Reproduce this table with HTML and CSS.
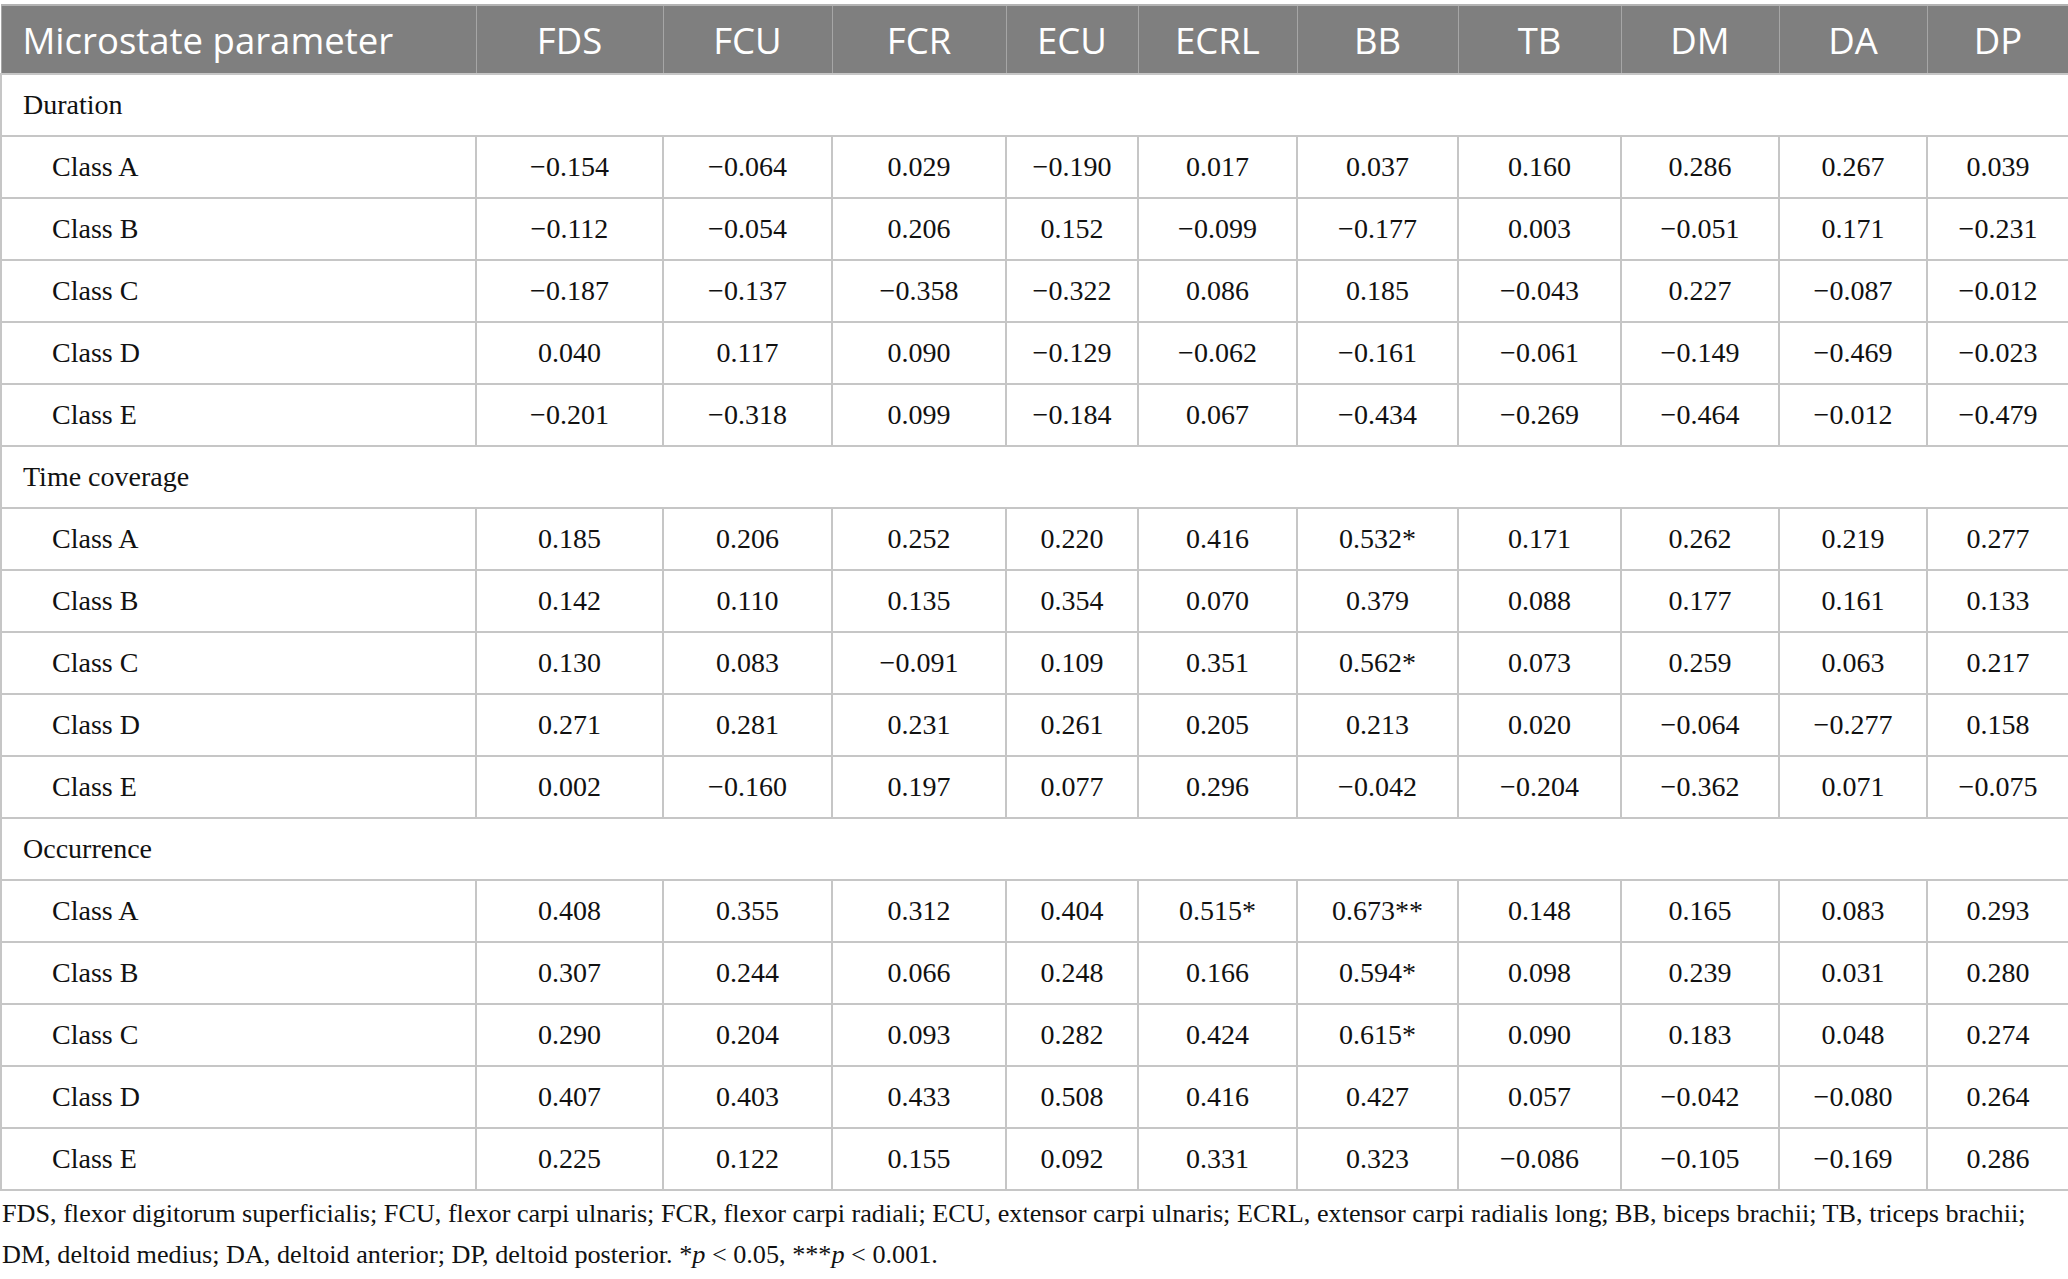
FILE: index.html
```html
<!DOCTYPE html>
<html>
  <head>
    <title>Microstate parameters and muscle activity</title>
    <link rel="stylesheet" href="styles.css">
  </head>
  <body>
    <table class="data">
      <colgroup>
        <col class="c-label">
        <col class="c-fds">
        <col class="c-fcu">
        <col class="c-fcr">
        <col class="c-ecu">
        <col class="c-ecrl">
        <col class="c-bb">
        <col class="c-tb">
        <col class="c-dm">
        <col class="c-da">
        <col class="c-dp">
      </colgroup>
      <thead>
        <tr>
          <th class="first">Microstate parameter</th>
          <th>FDS</th>
          <th>FCU</th>
          <th>FCR</th>
          <th>ECU</th>
          <th>ECRL</th>
          <th>BB</th>
          <th>TB</th>
          <th>DM</th>
          <th>DA</th>
          <th>DP</th>
        </tr>
      </thead>
      <tbody>
        <tr class="section"><td colspan="11">Duration</td></tr>
        <tr><td class="cls">Class A</td><td>&minus;0.154</td><td>&minus;0.064</td><td>0.029</td><td>&minus;0.190</td><td>0.017</td><td>0.037</td><td>0.160</td><td>0.286</td><td>0.267</td><td>0.039</td></tr>
        <tr><td class="cls">Class B</td><td>&minus;0.112</td><td>&minus;0.054</td><td>0.206</td><td>0.152</td><td>&minus;0.099</td><td>&minus;0.177</td><td>0.003</td><td>&minus;0.051</td><td>0.171</td><td>&minus;0.231</td></tr>
        <tr><td class="cls">Class C</td><td>&minus;0.187</td><td>&minus;0.137</td><td>&minus;0.358</td><td>&minus;0.322</td><td>0.086</td><td>0.185</td><td>&minus;0.043</td><td>0.227</td><td>&minus;0.087</td><td>&minus;0.012</td></tr>
        <tr><td class="cls">Class D</td><td>0.040</td><td>0.117</td><td>0.090</td><td>&minus;0.129</td><td>&minus;0.062</td><td>&minus;0.161</td><td>&minus;0.061</td><td>&minus;0.149</td><td>&minus;0.469</td><td>&minus;0.023</td></tr>
        <tr><td class="cls">Class E</td><td>&minus;0.201</td><td>&minus;0.318</td><td>0.099</td><td>&minus;0.184</td><td>0.067</td><td>&minus;0.434</td><td>&minus;0.269</td><td>&minus;0.464</td><td>&minus;0.012</td><td>&minus;0.479</td></tr>
        <tr class="section"><td colspan="11">Time coverage</td></tr>
        <tr><td class="cls">Class A</td><td>0.185</td><td>0.206</td><td>0.252</td><td>0.220</td><td>0.416</td><td>0.532*</td><td>0.171</td><td>0.262</td><td>0.219</td><td>0.277</td></tr>
        <tr><td class="cls">Class B</td><td>0.142</td><td>0.110</td><td>0.135</td><td>0.354</td><td>0.070</td><td>0.379</td><td>0.088</td><td>0.177</td><td>0.161</td><td>0.133</td></tr>
        <tr><td class="cls">Class C</td><td>0.130</td><td>0.083</td><td>&minus;0.091</td><td>0.109</td><td>0.351</td><td>0.562*</td><td>0.073</td><td>0.259</td><td>0.063</td><td>0.217</td></tr>
        <tr><td class="cls">Class D</td><td>0.271</td><td>0.281</td><td>0.231</td><td>0.261</td><td>0.205</td><td>0.213</td><td>0.020</td><td>&minus;0.064</td><td>&minus;0.277</td><td>0.158</td></tr>
        <tr><td class="cls">Class E</td><td>0.002</td><td>&minus;0.160</td><td>0.197</td><td>0.077</td><td>0.296</td><td>&minus;0.042</td><td>&minus;0.204</td><td>&minus;0.362</td><td>0.071</td><td>&minus;0.075</td></tr>
        <tr class="section"><td colspan="11">Occurrence</td></tr>
        <tr><td class="cls">Class A</td><td>0.408</td><td>0.355</td><td>0.312</td><td>0.404</td><td>0.515*</td><td>0.673**</td><td>0.148</td><td>0.165</td><td>0.083</td><td>0.293</td></tr>
        <tr><td class="cls">Class B</td><td>0.307</td><td>0.244</td><td>0.066</td><td>0.248</td><td>0.166</td><td>0.594*</td><td>0.098</td><td>0.239</td><td>0.031</td><td>0.280</td></tr>
        <tr><td class="cls">Class C</td><td>0.290</td><td>0.204</td><td>0.093</td><td>0.282</td><td>0.424</td><td>0.615*</td><td>0.090</td><td>0.183</td><td>0.048</td><td>0.274</td></tr>
        <tr><td class="cls">Class D</td><td>0.407</td><td>0.403</td><td>0.433</td><td>0.508</td><td>0.416</td><td>0.427</td><td>0.057</td><td>&minus;0.042</td><td>&minus;0.080</td><td>0.264</td></tr>
        <tr><td class="cls">Class E</td><td>0.225</td><td>0.122</td><td>0.155</td><td>0.092</td><td>0.331</td><td>0.323</td><td>&minus;0.086</td><td>&minus;0.105</td><td>&minus;0.169</td><td>0.286</td></tr>
      </tbody>
    </table>
    <p class="note">
      FDS, flexor digitorum superficialis; FCU, flexor carpi ulnaris; FCR, flexor carpi radiali; ECU, extensor carpi ulnaris; ECRL, extensor carpi radialis long; BB, biceps brachii; TB, triceps brachii; DM, deltoid medius; DA, deltoid anterior; DP, deltoid posterior. <span class="sig">*<i>p</i>&nbsp;&lt;&nbsp;0.05,</span> <span class="sig">***<i>p</i>&nbsp;&lt;&nbsp;0.001.</span>
    </p>
  </body>
</html>
```

FILE: styles.css
```css
body {
  margin: 0;
  padding-top: 4px;
  background: #ffffff;
  font-family: "Liberation Serif", serif;
  color: #111111;
}

/* main table */
.data {
  width: 2068px;
  table-layout: fixed;
  border-collapse: collapse;
}

.c-label { width: 475px; }
.c-fds { width: 187px; }
.c-fcu { width: 169px; }
.c-fcr { width: 174px; }
.c-ecu { width: 132px; }
.c-ecrl { width: 159px; }
.c-bb { width: 161px; }
.c-tb { width: 163px; }
.c-dm { width: 158px; }
.c-da { width: 148px; }
.c-dp { width: 142px; }

.data th {
  height: 67px;
  padding: 0;
  background: #7f7f7f;
  color: #ffffff;
  font-family: "Open Sans", sans-serif;
  font-weight: normal;
  font-size: 36.5px;
  text-align: center;
  border: 1px solid #a6a6a6;
  border-top: 2px solid #b3b3b3;
}

.data th.first {
  text-align: left;
  padding-left: 21px;
}

.data td {
  height: 60px;
  padding: 0;
  font-size: 28px;
  text-align: center;
  border: 2px solid #c6c6c6;
}

.data td.cls {
  text-align: left;
  padding-left: 50px;
}

.data .section td {
  text-align: left;
  padding-left: 21px;
}

/* footnote */
.note {
  max-width: 2030px;
  margin: 2px 0 0 2px;
  font-size: 26.2px;
  line-height: 41px;
}

.note .sig {
  white-space: nowrap;
}
```
